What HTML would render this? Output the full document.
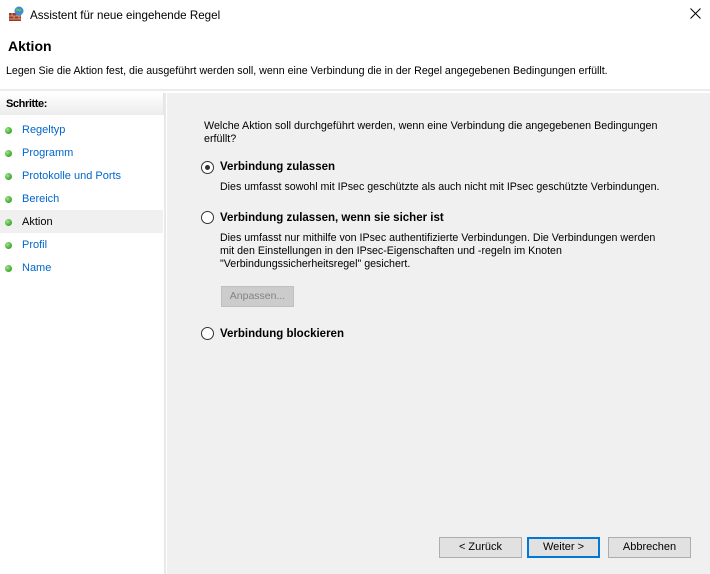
<!DOCTYPE html>
<html><head><meta charset="utf-8"><style>
*{margin:0;padding:0;box-sizing:border-box}
body{width:710px;height:574px;background:#fff;font-family:"Liberation Sans",sans-serif;font-size:12px;color:#000;position:relative;overflow:hidden}
.a{position:absolute;white-space:nowrap}
.dot{position:absolute;left:5px;width:7px;height:7px;border-radius:50%;background:radial-gradient(circle at 35% 35%,#9fe58a,#3aa52a 70%)}
.lk{position:absolute;left:22px;color:#0066cc}
.rb{position:absolute;width:13px;height:13px;border:1px solid #333;border-radius:50%;background:#fff}
.btn{position:absolute;height:21px;border:1px solid #adadad;background:#e1e1e1;text-align:center;line-height:19px;font-size:11px}
</style></head><body>
<svg class="a" style="left:8px;top:6px" width="17" height="16" viewBox="0 0 17 16">
<rect x="1" y="7" width="12" height="8" fill="#9b3b2a"/>
<path d="M1 10h12M1 13h12M4 7v3M9 7v3M6 10v3M11 10v3" stroke="#e6b08a" stroke-width="0.8"/>
<circle cx="11" cy="5" r="4.5" fill="#3c8fd6"/><path d="M8 4c2-1 3 1 5 0" stroke="#6cc24a" stroke-width="2" fill="none"/>
</svg>
<div class="a" style="left:30px;top:9px;font-size:11.6px">Assistent für neue eingehende Regel</div>
<svg class="a" style="left:690px;top:8px" width="11" height="11" viewBox="0 0 11 11"><path d="M0.5 0.5L10.5 10.5M10.5 0.5L0.5 10.5" stroke="#000" stroke-width="1"/></svg>
<div class="a" style="left:8px;top:38px;font-size:14px;font-weight:bold">Aktion</div>
<div class="a" style="left:6px;top:65px;font-size:10.65px">Legen Sie die Aktion fest, die ausgeführt werden soll, wenn eine Verbindung die in der Regel angegebenen Bedingungen erfüllt.</div>
<div class="a" style="left:0;top:89px;width:710px;height:2px;background:#ececec"></div>
<div class="a" style="left:0;top:93px;width:164px;height:22px;background:linear-gradient(#fff,#ececec);border-right:1px solid #e5e5e5"></div>
<div class="a" style="left:6px;top:98px;font-size:11px;font-weight:bold;letter-spacing:-0.4px">Schritte:</div>
<div class="a" style="left:164px;top:93px;width:2px;height:481px;background:#e8e8e8"></div>
<div class="a" style="left:167px;top:93px;width:543px;height:481px;background:#f0f0f0"></div>
<div class="a" style="left:0;top:210px;width:163px;height:23px;background:#f0f0f0"></div>
<div class="a" style="left:0;top:0;font-size:11px">
<div class="dot" style="top:127px"></div><div class="lk" style="top:124px">Regeltyp</div>
<div class="dot" style="top:150px"></div><div class="lk" style="top:147px">Programm</div>
<div class="dot" style="top:173px"></div><div class="lk" style="top:170px">Protokolle und Ports</div>
<div class="dot" style="top:196px"></div><div class="lk" style="top:193px">Bereich</div>
<div class="dot" style="top:219px"></div><div class="lk" style="top:216px;color:#000">Aktion</div>
<div class="dot" style="top:242px"></div><div class="lk" style="top:239px">Profil</div>
<div class="dot" style="top:265px"></div><div class="lk" style="top:262px">Name</div>
</div>
<div class="a" style="left:204px;top:120px;font-size:10.75px;line-height:12.5px">Welche Aktion soll durchgeführt werden, wenn eine Verbindung die angegebenen Bedingungen<br>erfüllt?</div>
<div class="rb" style="left:201px;top:161px"><div style="position:absolute;left:3px;top:3px;width:5px;height:5px;border-radius:50%;background:#333"></div></div>
<div class="a" style="left:220px;top:161px;font-weight:bold;font-size:11.5px">Verbindung zulassen</div>
<div class="a" style="left:220px;top:181px;font-size:10.65px">Dies umfasst sowohl mit IPsec geschützte als auch nicht mit IPsec geschützte Verbindungen.</div>
<div class="rb" style="left:201px;top:211px"></div>
<div class="a" style="left:220px;top:212px;font-weight:bold;font-size:11.5px">Verbindung zulassen, wenn sie sicher ist</div>
<div class="a" style="left:220px;top:232px;font-size:10.65px;line-height:13px">Dies umfasst nur mithilfe von IPsec authentifizierte Verbindungen. Die Verbindungen werden<br>mit den Einstellungen in den IPsec-Eigenschaften und -regeln im Knoten<br>"Verbindungssicherheitsregel" gesichert.</div>
<div class="btn" style="left:221px;top:286px;width:73px;background:#ccc;border-color:#bfbfbf;color:#838383;font-size:10.5px">Anpassen...</div>
<div class="rb" style="left:201px;top:327px"></div>
<div class="a" style="left:220px;top:328px;font-weight:bold;font-size:11.5px">Verbindung blockieren</div>
<div class="btn" style="left:439px;top:537px;width:83px">&lt; Zurück</div>
<div class="btn" style="left:527px;top:537px;width:73px;border:2px solid #0078d7;line-height:17px">Weiter &gt;</div>
<div class="btn" style="left:608px;top:537px;width:83px">Abbrechen</div>
</body></html>
